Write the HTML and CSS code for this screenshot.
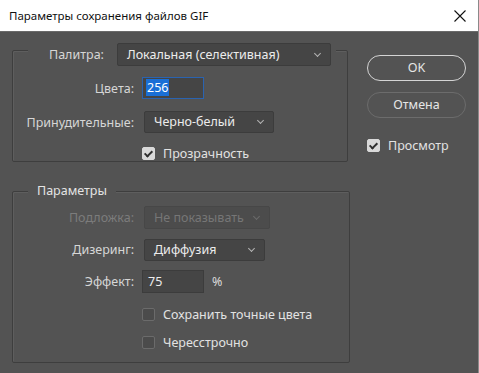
FILE: index.html
```html
<!DOCTYPE html>
<html lang="ru">
<head>
  <meta charset="UTF-8">
  <title>Параметры сохранения файлов GIF</title>
  <link rel="stylesheet" href="styles.css">
</head>
<body>
  <div class="titlebar">
    <span class="title">Параметры сохранения файлов GIF</span>
    <svg class="close" width="12" height="12" viewBox="0 0 12 12">
      <path d="M0.5 0.5 L11.5 11.5 M11.5 0.5 L0.5 11.5" stroke="#111" stroke-width="1.1" fill="none"/>
    </svg>
  </div>

  <div class="dialog">
    <div class="left">
      <!-- Palette group -->
      <div class="group group-palette">
        <div class="group-head head-palette">
          <span class="label">Палитра:</span>
          <div class="select select-palette">Локальная (селективная)<span class="chev"></span></div>
        </div>
        <div class="rows rows-palette">
          <div class="row row-short">
            <span class="label col">Цвета:</span>
            <div class="field field-focus"><span class="sel">256</span></div>
          </div>
          <div class="row row-short">
            <span class="label col">Принудительные:</span>
            <div class="select select-forced">Черно-белый<span class="chev"></span></div>
          </div>
          <div class="row row-check">
            <span class="col"></span>
            <label class="check"><span class="box box-on"></span>Прозрачность</label>
          </div>
        </div>
      </div>

      <!-- Options group -->
      <div class="group group-options">
        <div class="group-head head-options">Параметры</div>
        <div class="rows rows-options">
          <div class="row">
            <span class="label col disabled">Подложка:</span>
            <div class="select select-matte is-disabled">Не показывать<span class="chev"></span></div>
          </div>
          <div class="row">
            <span class="label col">Дизеринг:</span>
            <div class="select select-dither">Диффузия<span class="chev"></span></div>
          </div>
          <div class="row">
            <span class="label col">Эффект:</span>
            <div class="field">75</div>
            <span class="unit">%</span>
          </div>
          <div class="row row-check first-check">
            <span class="col"></span>
            <label class="check"><span class="box"></span>Сохранить точные цвета</label>
          </div>
          <div class="row row-check last-check">
            <span class="col"></span>
            <label class="check"><span class="box"></span>Чересстрочно</label>
          </div>
        </div>
      </div>
    </div>

    <div class="right">
      <button class="btn btn-primary">OK</button>
      <button class="btn">Отмена</button>
      <label class="check preview"><span class="box box-on"></span>Просмотр</label>
    </div>
  </div>
</body>
</html>
```

FILE: styles.css
```css
body {
  margin: 0;
  background: #535353;
  font-family: "Noto Sans", "Open Sans", sans-serif;
  font-size: 12.5px;
  color: #dcdcdc;
  height: 373px;
  overflow: hidden;
  border-right: 1px solid #8a8a8a;
  box-sizing: border-box;
}

.titlebar {
  height: 31px;
  background: #fff;
  display: flex;
  align-items: center;
  justify-content: space-between;
  padding: 0 12px 0 9px;
  border-bottom: 1px solid #6a6a6a;
}

.title {
  color: #111;
  font-size: 11.5px;
  padding-bottom: 1px;
}

.close {
  margin-top: 1px;
}

.dialog {
  display: flex;
  padding-left: 12px;
}

.left {
  width: 338px;
}

/* group boxes */
.group {
  border: 1px solid #3e3e3e;
  border-radius: 2px;
  box-shadow: inset 1px 1px 0 #5e5e5e;
}

.group-palette {
  margin-top: 18px;
  width: 334px;
  height: 110px;
}

.group-options {
  margin-top: 29px;
  height: 170px;
}

.group-head {
  background: #535353;
  width: fit-content;
  margin-left: 15px;
}

.head-palette {
  display: flex;
  align-items: center;
  margin-top: -8px;
  padding: 0 5px 0 21px;
  gap: 13px;
}

.head-options {
  margin-top: -9px;
  height: 16px;
  line-height: 16px;
  padding: 0 9px;
  color: #e4e4e4;
}

.rows {
  display: flex;
  flex-direction: column;
}

.rows-palette {
  padding-top: 11px;
  gap: 12px;
}

.rows-options {
  padding-top: 7px;
  gap: 9px;
}

.row {
  display: flex;
  align-items: center;
  height: 23px;
}

.row-short {
  height: 22px;
}

.row-check {
  height: 16px;
}

.first-check {
  margin-top: 4px;
}

.last-check {
  margin-top: 3px;
}

.col {
  width: 121px;
  text-align: right;
  margin-right: 8px;
  flex-shrink: 0;
}

.label {
  color: #d6d6d6;
}

.disabled {
  color: #7c7c7c;
}

/* dropdowns */
.select {
  position: relative;
  box-sizing: border-box;
  height: 23px;
  line-height: 21px;
  background: #454545;
  border: 1px solid #3c3c3c;
  border-radius: 2px;
  color: #ececec;
  padding-left: 9px;
  font-size: 12.5px;
}

.select-palette { width: 214px; }
.select-forced { width: 130px; margin-left: 2px; height: 22px; line-height: 20px; }
.select-matte { width: 126px; margin-left: 2px; }
.select-dither { width: 121px; margin-left: 2px; height: 22px; line-height: 20px; }

.is-disabled {
  background: #4c4c4c;
  color: #767676;
  border-color: #474747;
}

.chev {
  position: absolute;
  right: 10px;
  top: 50%;
  width: 4px;
  height: 4px;
  margin-top: -4px;
  border-right: 1px solid #b4b4b4;
  border-bottom: 1px solid #b4b4b4;
  transform: rotate(45deg);
}

.is-disabled .chev {
  border-color: #6a6a6a;
}

/* text fields */
.field {
  box-sizing: border-box;
  width: 62px;
  height: 23px;
  line-height: 21px;
  background: #454545;
  border: 1px solid #3c3c3c;
  padding-left: 5px;
  color: #ececec;
  font-size: 12.5px;
}

.field-focus {
  height: 22px;
  line-height: 20px;
  border-color: #2a63b0;
  padding-left: 3px;
}

.sel {
  background: #1a6fd6;
  color: #fff;
  padding: 0 1px;
}

.unit {
  margin-left: 8px;
  color: #dcdcdc;
  font-size: 12.5px;
}

/* checkboxes */
.check {
  display: flex;
  align-items: center;
  gap: 8px;
  color: #e2e2e2;
  font-size: 12.5px;
}

.box {
  box-sizing: border-box;
  width: 13px;
  height: 13px;
  border-radius: 2px;
  background: #4b4b4b;
  border: 1px solid #6b6b6b;
  position: relative;
}

.box-on {
  background: #d9d9d9;
  border-color: #d9d9d9;
}

.box-on::after {
  content: "";
  position: absolute;
  left: 3px;
  top: 1px;
  width: 3px;
  height: 6px;
  border-right: 2px solid #2f2f2f;
  border-bottom: 2px solid #2f2f2f;
  transform: rotate(45deg);
}

/* right column */
.right {
  display: flex;
  flex-direction: column;
  margin-left: 17px;
  padding-top: 23px;
}

.btn {
  width: 99px;
  height: 26px;
  border-radius: 13px;
  background: transparent;
  border: 1.5px solid #6c6c6c;
  color: #e6e6e6;
  font-family: inherit;
  font-size: 12.5px;
  padding: 0 0 1px;
  margin-bottom: 11px;
}

.btn-primary {
  border-color: #d4d4d4;
}

.preview {
  margin-top: 8px;
}
```
